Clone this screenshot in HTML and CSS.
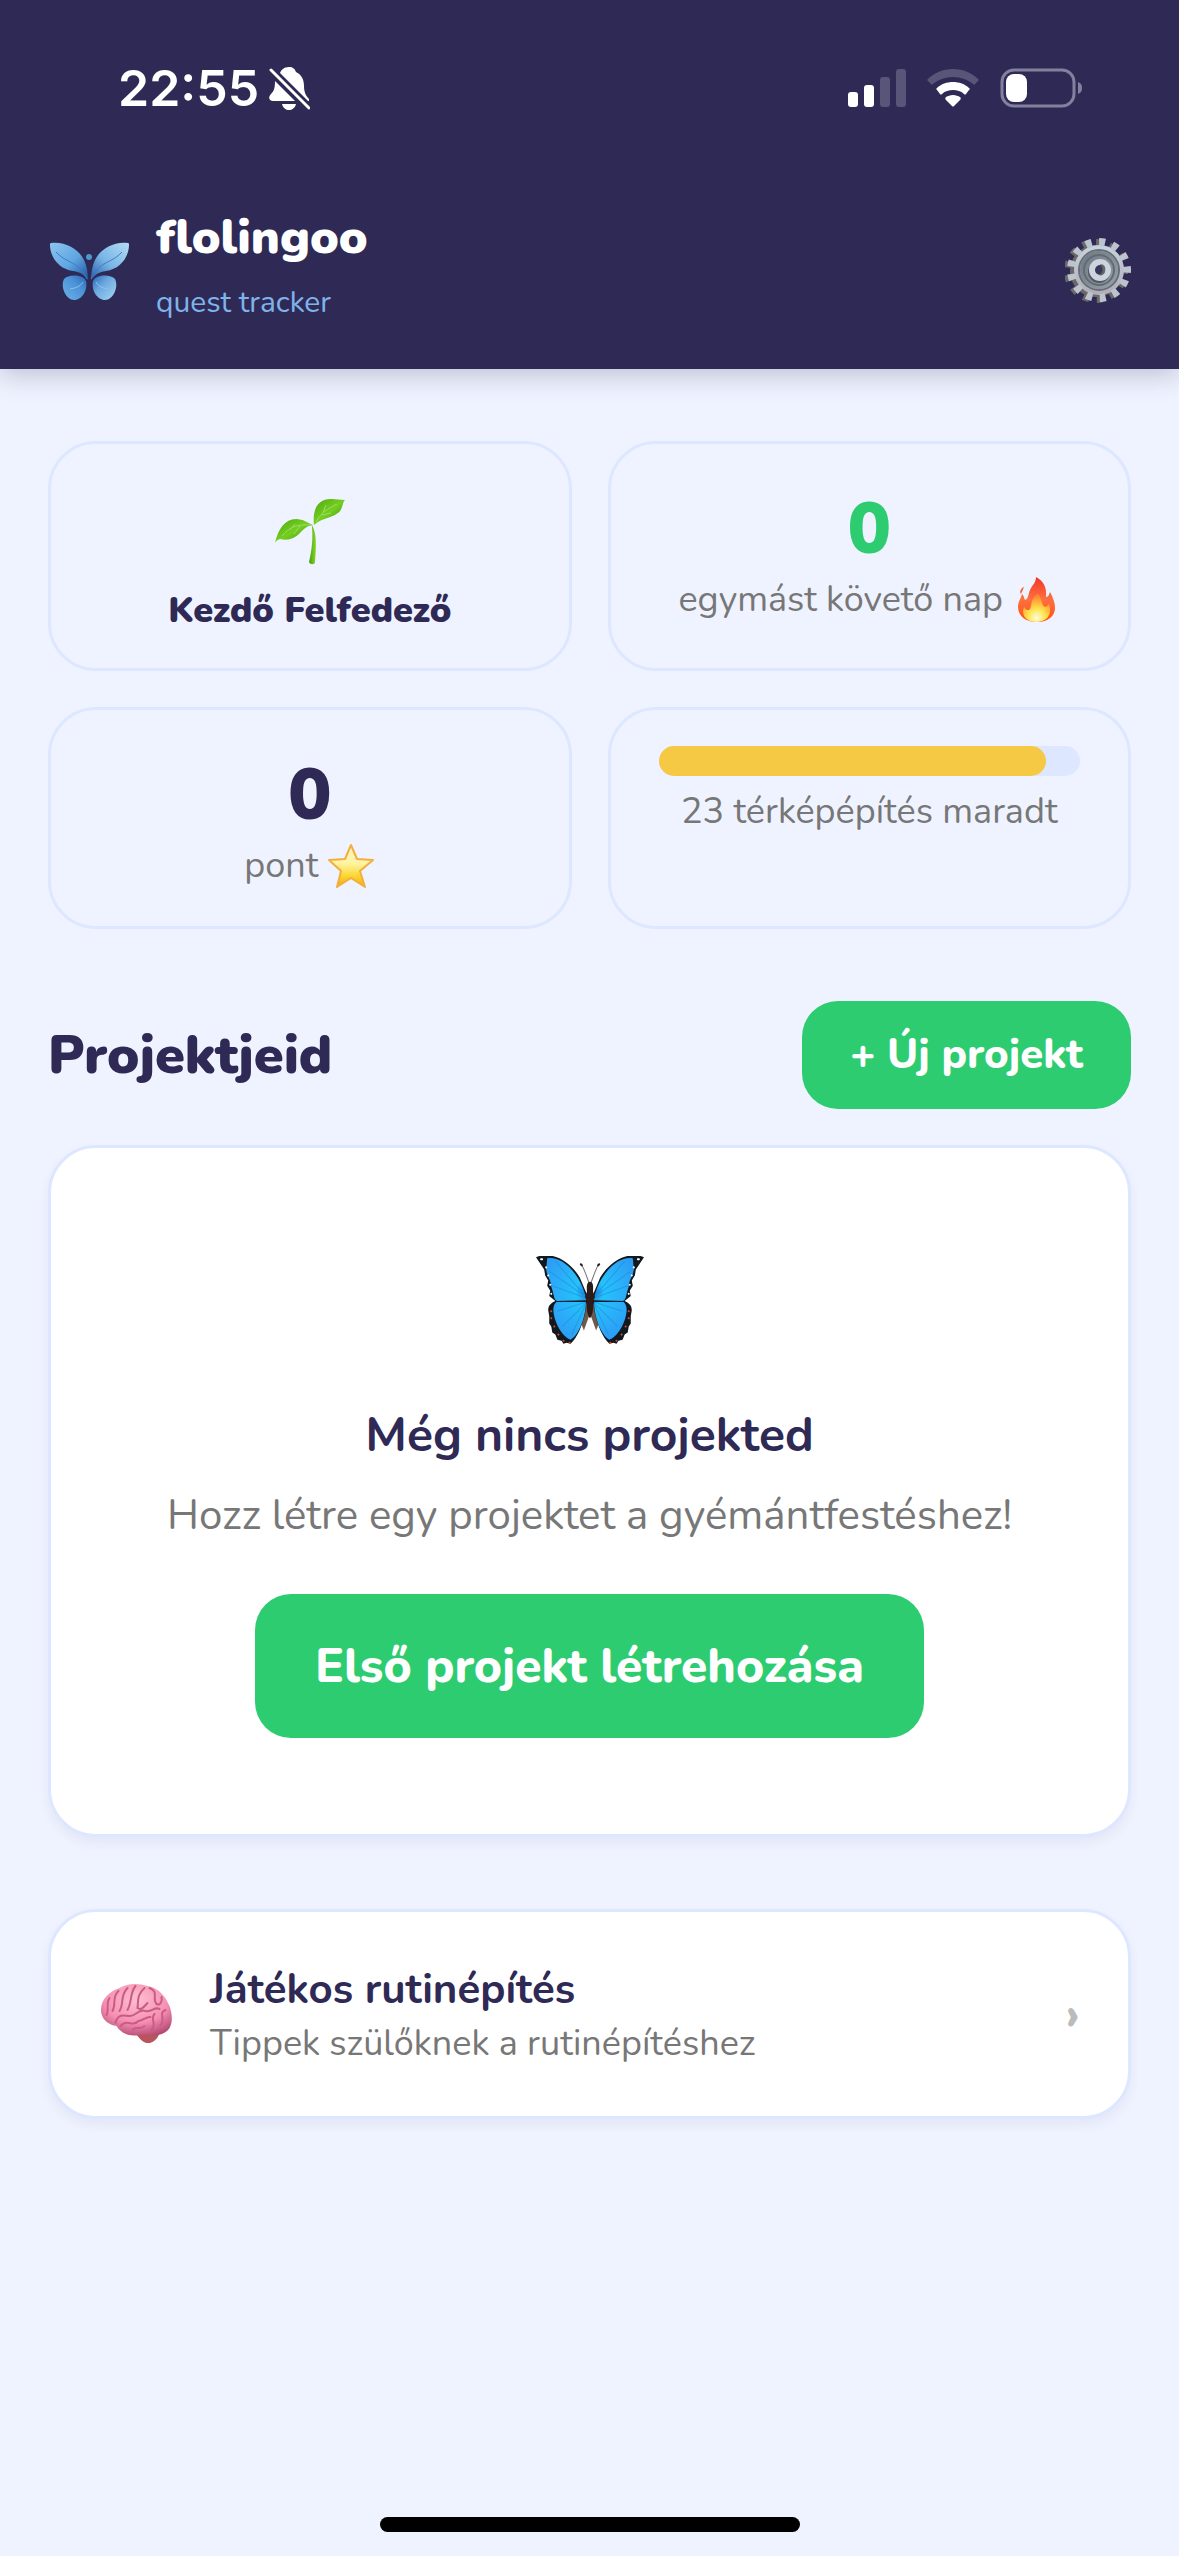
FILE: index.html
```html
<!DOCTYPE html>
<html lang="hu">
<head>
<meta charset="utf-8">
<meta name="viewport" content="width=device-width, initial-scale=1">
<title>flolingoo quest tracker</title>
<link rel="stylesheet" href="styles.css">
</head>
<body>
<header class="header">
  <div class="statusbar">
    <div class="statusbar-left">
      <time class="clock">22:55</time>
      <svg class="icon-bell" viewBox="0 0 42 44" aria-hidden="true">
        <path fill="#fff" d="M12 7C13 4 16 1 21 1c4 0 6 2 7 5 6 3 8 8 8 14 0 6 2 10 5 13v2h-1L12 7z"/>
        <path fill="#fff" d="M7 15l20 20H5c-4 0-5-4-2-7 3-3 4-6 4-13zM14 38h14c-1 4-4 6-7 6s-6-2-7-6z"/>
        <path stroke="#fff" stroke-width="3" stroke-linecap="round" d="M3 4l38 38"/>
      </svg>
    </div>
    <div class="statusbar-right">
      <svg class="icon-signal" viewBox="0 0 58 38" aria-hidden="true">
        <g fill="#fff"><rect y="23" width="10" height="15" rx="3"/><rect x="16" y="16" width="10" height="22" rx="3"/></g>
        <g fill="#585578"><rect x="32" y="8" width="10" height="30" rx="3"/><rect x="48" width="10" height="38" rx="3"/></g>
      </svg>
      <svg class="icon-wifi" viewBox="0 0 52 38" aria-hidden="true">
        <path fill="#585578" d="M26 0c10 0 19 4 25 10c1 1 1 1 0 2l-3 3c-1 1-1 1-2 0C41 11 34 8 26 8S11 11 6 15c-1 1-1 1-2 0l-3-3c-1-1-1-1 0-2C7 4 16 0 26 0z"/>
        <path fill="#fff" d="M26 13c6 0 12 2 16 6 1 1 1 1 0 2l-3 4c-1 1-1 1-2 0-3-3-7-4-11-4s-8 1-11 4c-1 1-1 1-2 0l-3-4c-1-1-1-1 0-2 4-4 10-6 16-6zM26 26c3 0 5 1 7 2 1 1 1 2 0 3l-6 6c-1 1-1 1-2 0l-6-6c-1-1-1-2 0-3 2-1 4-2 7-2z"/>
      </svg>
      <svg class="icon-battery" viewBox="0 0 83 40" aria-hidden="true">
        <rect x="2" y="2" width="72" height="36" rx="12" fill="none" stroke="#83809d" stroke-width="3"/>
        <rect x="6" y="6" width="21" height="28" rx="8" fill="#fff"/>
        <path fill="#83809d" d="M78 14c3 1 4 3 4 6s-1 5-4 6z"/>
      </svg>
    </div>
  </div>
  <div class="brandbar">
    <svg class="logo" viewBox="0 0 82 60" aria-hidden="true">
      <defs>
        <linearGradient id="wingL" x1="0" y1="0" x2="1" y2="1"><stop offset="0" stop-color="#8cc4ee"/><stop offset=".55" stop-color="#5fa6e2"/><stop offset="1" stop-color="#1d4f9c"/></linearGradient>
        <linearGradient id="wingR" x1="1" y1="0" x2="0" y2="1"><stop offset="0" stop-color="#b5dcf2"/><stop offset=".55" stop-color="#79b6e6"/><stop offset="1" stop-color="#2359a8"/></linearGradient>
        <linearGradient id="lowL" x1="0" y1="1" x2="1" y2="0"><stop offset="0" stop-color="#6fb1e8"/><stop offset=".6" stop-color="#4c93d8"/><stop offset="1" stop-color="#2c66b4"/></linearGradient>
        <linearGradient id="lowR" x1="1" y1="1" x2="0" y2="0"><stop offset="0" stop-color="#a9d6f0"/><stop offset=".6" stop-color="#6aa9e0"/><stop offset="1" stop-color="#2c66b4"/></linearGradient>
      </defs>
      <path fill="url(#wingL)" d="M3 3c14-2 28 6 33 17 3 6 4 14 4 20-4-5-7-8-15-9C10 29 2 16 2 5c0-1 0-2 1-2z"/>
      <path fill="url(#wingR)" d="M80 3C66 1 52 9 47 20c-3 6-4 14-4 20 4-5 7-8 15-9C73 29 81 16 81 5c0-1 0-2-1-2z"/>
      <path fill="url(#lowL)" d="M16 39c4-5 19-5 22 2 2 9-4 19-12 19-8 0-14-13-10-21z"/>
      <path fill="url(#lowR)" d="M67 39c-4-5-19-5-22 2-2 9 4 19 12 19 8 0 14-13 10-21z"/>
      <path fill="none" stroke="#3b7cc6" d="M8 12c11 12 23 9 31 27M74 12C63 24 51 21 43 39"/>
      <path fill="none" stroke="#8cc4ee" d="M22 49c5-1 10-2 13-7M60 49c-5-1-9-2-12-7"/>
      <circle cx="41" cy="17" r="3" fill="#4f97cf"/>
    </svg>
    <div class="brand">
      <h1 class="brand-name">flolingoo</h1>
      <p class="brand-sub">quest tracker</p>
    </div>
    <button class="settings" type="button" aria-label="Beállítások">
      <svg viewBox="0 0 66 66" aria-hidden="true">
        <defs>
          <linearGradient id="steel" x1="0" y1="0" x2="0" y2="1"><stop offset="0" stop-color="#c6d2dc"/><stop offset="1" stop-color="#b3aeb9"/></linearGradient>
          <linearGradient id="dish" x1="0" y1="0" x2="1" y2="1"><stop offset="0" stop-color="#69747d"/><stop offset="1" stop-color="#9ba5ad"/></linearGradient>
        </defs>
        <g transform="translate(-3 1)" fill="none" stroke="#6b6968">
          <circle cx="34" cy="33" r="22" stroke-width="8"/>
          <circle cx="34" cy="33" r="28" stroke-width="8" stroke-dasharray="6 7.53" transform="rotate(-7 34 33)"/>
        </g>
        <circle cx="34" cy="33" r="22" stroke="url(#steel)" stroke-width="6" fill="url(#dish)"/>
        <circle cx="34" cy="33" r="28" fill="none" stroke="#bcc5cf" stroke-width="8" stroke-dasharray="6 7.53" transform="rotate(-7 34 33)"/>
        <circle cx="34" cy="33" r="20" fill="none" stroke="#666f78" stroke-width="2"/>
        <circle cx="34" cy="33" r="15" fill="none" stroke="#626b73" stroke-width="2"/>
        <circle cx="34" cy="35" r="11" fill="#535860"/>
        <circle cx="35" cy="33" r="8" fill="#37395c" stroke="#ccd4df" stroke-width="6"/>
        <path fill="#686664" d="M35 27c5 0 6 4 5 8-1 3-4 4-6 3 4-2 5-6 1-11z"/>
      </svg>
    </button>
  </div>
</header>

<main class="content">
  <section class="stats" aria-label="Statisztika">
    <div class="stat">
      <svg class="sprout" viewBox="0 0 72 68" aria-hidden="true">
        <defs>
          <linearGradient id="leaf" x1="0" y1="0" x2="1" y2="1"><stop offset="0" stop-color="#4aa80e"/><stop offset=".5" stop-color="#75cf20"/><stop offset="1" stop-color="#358a08"/></linearGradient>
          <linearGradient id="stem" x1="0" x2="1"><stop offset="0" stop-color="#4a9c0c"/><stop offset="1" stop-color="#86db2b"/></linearGradient>
        </defs>
        <path fill="url(#stem)" d="M38 27c4 8 5 16 3 37 0 3-5 3-6 0 3-13 4-23 3-36z"/>
        <path fill="url(#leaf)" d="M1 45c3-14 10-24 21-24 7 0 12 4 17 6-7 1-9 4-13 8-6 6-12 8-20 6-3 1-4 2-5 4z"/>
        <path fill="url(#leaf)" d="M40 27C38 10 45 0 58 1l13 1c-2 2-2 4-3 7-3 11-18 9-28 18z"/>
        <path fill="none" stroke="#a0d96b" d="M8 38c8-9 14-12 30-11M42 24C47 15 53 11 63 6M16 32l5-6M20 36l6-8M49 15l3-8M48 17l9-2"/>
      </svg>
      <p class="rank">Kezdő Felfedező</p>
    </div>
    <div class="stat">
      <p class="value value-green">0</p>
      <p class="caption">egymást követő nap
        <svg class="emoji" viewBox="0 0 48 48" aria-hidden="true">
          <defs>
            <linearGradient id="flame" x1="0" y1="0" x2="0" y2="1"><stop offset="0" stop-color="#f0382a"/><stop offset=".5" stop-color="#ff7040"/><stop offset="1" stop-color="#ff5010"/></linearGradient>
            <radialGradient id="core" cx=".5" cy=".85" r=".75"><stop offset="0" stop-color="#fffdd8"/><stop offset=".45" stop-color="#ffe24a"/><stop offset="1" stop-color="#ff8a32"/></radialGradient>
          </defs>
          <path fill="url(#flame)" d="M24 1c7 4 11 9 10 20 3 0 3-3 4-5 3 5 5 11 5 16 0 8-7 14-18 14S6 40 6 31c0-6 3-8 4-13 2 2 2 4 3 6 4-2 3-6 5-10 2-5 6-7 6-13zM12 11l-3 7c-2-2 0-6 3-7z"/>
          <path fill="url(#core)" d="M26 18c5 6 3 11 7 13 3-1 3-2 4-3 3 9 0 17-12 18C13 46 9 38 12 31c2 3 3 3 5 3 4-3 0-11 9-16z"/>
        </svg></p>
    </div>
    <div class="stat">
      <p class="value">0</p>
      <p class="caption">pont
        <svg class="emoji" viewBox="0 0 48 48" aria-hidden="true">
          <defs><linearGradient id="gold" x1="0" y1="0" x2="0" y2="1"><stop offset="0" stop-color="#fff6bf"/><stop offset=".45" stop-color="#fff3a0"/><stop offset=".75" stop-color="#fcd52c"/><stop offset="1" stop-color="#f3a51b"/></linearGradient></defs>
          <path fill="url(#gold)" stroke="#f2ae3e" stroke-width="2" stroke-linejoin="round" d="M24 3l6 14 16 1-13 11 5 16-14-9-14 9 4-16L2 18l16-1z"/>
        </svg></p>
    </div>
    <div class="stat stat-progress">
      <div class="track" role="progressbar" aria-valuenow="92" aria-valuemin="0" aria-valuemax="100" aria-label="Térképépítés"><div class="fill" style="width:92%"></div></div>
      <p class="caption">23 térképépítés maradt</p>
    </div>
  </section>

  <section class="projects">
    <div class="section-head">
      <h2 class="section-title">Projektjeid</h2>
      <button class="btn btn-small" type="button">+ Új projekt</button>
    </div>
    <div class="card empty">
      <svg class="butterfly" viewBox="1 3 106 88" aria-hidden="true">
        <defs><radialGradient id="morpho" gradientUnits="userSpaceOnUse" cx="54" cy="38" r="55"><stop offset="0" stop-color="#1f62c8"/><stop offset=".25" stop-color="#25c2fa"/><stop offset=".6" stop-color="#2aaef8"/><stop offset="1" stop-color="#2d98f2"/></radialGradient></defs>
        <g id="half">
          <path fill="#6d5a4a" d="M50 48l3 14-5 14-4-10z"/>
          <path fill="#101820" d="M1 4C18-3 36 10 44 24l8 19-3 17c-3 12-7 22-14 29l-4-1-3 1-2-3-4-1-2-5-3-2-1-6-2-3v-7l-1-6c0-5 3-7 7-9l-6-5 1-5-3-5 1-5-3-5-1-6z"/>
          <path fill="url(#morpho)" d="M12 5c14-2 28 12 35 29l4 12-29 1c-4-1-3-6-6-14 0-6-4-10-5-17zM21 48l29 0c0 13-6 32-15 37-8-3-16-16-17-29 0-4 1-6 3-8z"/>
          <path fill="none" stroke="#1a86dc" stroke-opacity=".5" d="M50 43L20 8M50 43L14 18M50 44L17 32M50 46L26 47M50 48L22 57M50 49L27 72M50 50L36 80"/>
          <path fill="none" stroke="#fff" stroke-width="2" stroke-linecap="round" d="M6 6h1M11 14h0M13 22h0M15 31h0M16 40h0"/>
          <path fill="none" stroke="#e34a22" stroke-width="2" stroke-linecap="round" d="M16 57h0M16 64h0M19 72h0M23 80h0M28 86h0M34 88h0"/>
          <path fill="none" stroke="#777" d="M53 29C51 24 49 17 46 12"/>
          <path stroke="#222" stroke-width="2" stroke-linecap="round" d="M45 11l1 1"/>
        </g>
        <use href="#half" transform="matrix(-1 0 0 1 108 0)"/>
        <path fill="#2b1c1a" d="M54 28c4 0 3 7 3 10l2 5-2 4c1 8-1 15-3 17-2-2-4-9-3-17l-2-4 2-5c0-3-1-10 3-10z"/>
      </svg>
      <h3 class="empty-title">Még nincs projekted</h3>
      <p class="empty-text">Hozz létre egy projektet a gyémántfestéshez!</p>
      <button class="btn btn-large" type="button">Első projekt létrehozása</button>
    </div>
  </section>

  <a class="card tip" href="#">
    <svg class="brain" viewBox="0 0 74 62" aria-hidden="true">
      <defs><radialGradient id="pink" cx=".5" cy=".3" r=".75"><stop offset="0" stop-color="#ffbfd0"/><stop offset=".6" stop-color="#f68fb2"/><stop offset="1" stop-color="#b14771"/></radialGradient></defs>
      <path fill="#b9535c" d="M36 50c4-7 17-9 24-2 0 7-7 13-13 12-4-1-8-5-11-10z"/>
      <path fill="url(#pink)" d="M2 31C-1 18 10 8 20 5c8-5 19-5 28-2 12 2 18 11 22 20 4 11 3 22-4 26-8 6-19 1-26 3-9 2-18-1-23-9-7-1-13-5-15-12z"/>
      <path fill="none" stroke="#c95c86" stroke-width="2" stroke-linecap="round" d="M10 15c-4 6 0 12-3 17M19 8c-7 6-2 13-6 20M28 5c-8 8-3 15-8 23M36 3c-6 7-3 15-8 24M45 5c-8 7-6 13-7 20 4 3 7-2 10-5M50 5c10 4 2 10 7 16 4 2 6-3 5-7M16 40c2-9 8-8 14-7s9-8 16-5c6 2 9-5 14-2M21 43c7-8 12 2 18-5 5 0 8-5 12-4M33 47c3-5 8 1 12-4M55 31c-5 6 3 9-3 16M66 27c-8 3 1 9-5 15"/>
    </svg>
    <span class="tip-text">
      <strong class="tip-title">Játékos rutinépítés</strong>
      <span class="caption">Tippek szülőknek a rutinépítéshez</span>
    </span>
    <span class="chevron" aria-hidden="true">›</span>
  </a>
</main>
<div class="home-indicator"></div>
</body>
</html>
```

FILE: styles.css
```css
:root {
  --navy: #2e2a55;
  --page: #eff3ff;
  --line: #dde7ff;
  --green: #2ecc71;
  --grey: #777;
}

* { box-sizing: border-box; margin: 0; }

body {
  min-height: 100vh;
  display: flex;
  flex-direction: column;
  background: var(--page);
  color: var(--navy);
  font-family: Nunito, Lato, "Noto Sans", sans-serif;
  font-size: 36px;
  line-height: 48px;
}

svg { display: block; flex: none; }

button { font: inherit; border: 0; cursor: pointer; }

.header {
  background: var(--navy);
  color: #fff;
  box-shadow: 0 6px 24px rgba(46, 42, 85, .25);
}

.statusbar {
  display: flex;
  justify-content: space-between;
  align-items: center;
  height: 176px;
  padding: 0 96px 0 118px;
}
.statusbar-left { display: flex; align-items: center; gap: 9px; }
.clock { font: 600 50px/60px Inter, sans-serif; }
.icon-bell { width: 42px; height: 44px; }
.statusbar-right { display: flex; align-items: center; gap: 21px; }
.icon-signal { width: 58px; height: 38px; }
.icon-wifi { width: 52px; height: 38px; }
.icon-battery { width: 83px; height: 40px; }

.brandbar {
  display: flex;
  align-items: center;
  height: 193px;
  padding: 0 48px 6px;
  gap: 26px;
}
.logo { width: 82px; height: 60px; }
.brand { flex: 1; padding-bottom: 12px; }
.brand-name { font-size: 48px; line-height: 72px; font-weight: 900; }
.brand-sub { font-size: 30px; line-height: 48px; color: #7fb3ea; margin-top: 6px; }
.settings { padding: 0; background: none; }
.settings svg { width: 66px; height: 66px; }

.content { padding: 72px 48px; }

.stats { display: grid; grid-template-columns: 1fr 1fr; gap: 36px; }
.stat {
  border: 3px solid var(--line);
  border-radius: 48px;
  padding: 48px 48px 30px;
  display: flex;
  flex-direction: column;
  align-items: center;
  text-align: center;
}
.sprout { width: 72px; height: 68px; margin: 6px 0 18px; }
.rank { line-height: 54px; font-weight: 900; }
.value { font-size: 72px; line-height: 72px; font-weight: 900; }
.value-green { color: var(--green); }
.caption { color: var(--grey); }
.stat .caption { display: flex; align-items: center; gap: 9px; line-height: 60px; margin-top: 6px; }
.emoji { width: 48px; height: 48px; }
.stat-progress { padding-top: 36px; }
.track { align-self: stretch; height: 30px; border-radius: 15px; background: var(--line); }
.fill { height: 100%; border-radius: 15px; background: #f6c945; }

.projects { padding-top: 72px; }
.section-head { display: flex; justify-content: space-between; align-items: center; margin-bottom: 36px; }
.section-title { font-size: 54px; line-height: 72px; font-weight: 900; }
.btn { background: var(--green); color: #fff; font-weight: 800; border-radius: 36px; }
.btn-small { font-size: 42px; line-height: 60px; padding: 24px 48px; }
.btn-large { font-size: 48px; line-height: 72px; padding: 36px 60px; }

.card {
  background: #fff;
  border: 3px solid var(--line);
  border-radius: 48px;
  box-shadow: 0 6px 12px rgba(46, 42, 85, .06);
}
.empty {
  display: flex;
  flex-direction: column;
  align-items: center;
  padding: 108px 48px 96px;
  text-align: center;
}
.butterfly { width: 108px; height: 90px; margin-bottom: 56px; }
.empty-title { font-size: 48px; line-height: 66px; font-weight: 700; margin-bottom: 18px; }
.empty-text { font-size: 42px; line-height: 60px; color: var(--grey); margin-bottom: 48px; }

.tip {
  display: flex;
  align-items: center;
  gap: 36px;
  margin-top: 72px;
  padding: 48px;
  color: inherit;
  text-decoration: none;
}
.brain { width: 75px; height: 62px; }
.tip-text { flex: 1; display: flex; flex-direction: column; }
.tip-title { font-size: 42px; line-height: 60px; font-weight: 700; }
.chevron { color: #bbb; font-size: 48px; font-weight: 800; }

.home-indicator {
  width: 420px;
  max-width: 60%;
  height: 15px;
  margin: auto auto 24px;
  border-radius: 8px;
  background: #000;
}
```
